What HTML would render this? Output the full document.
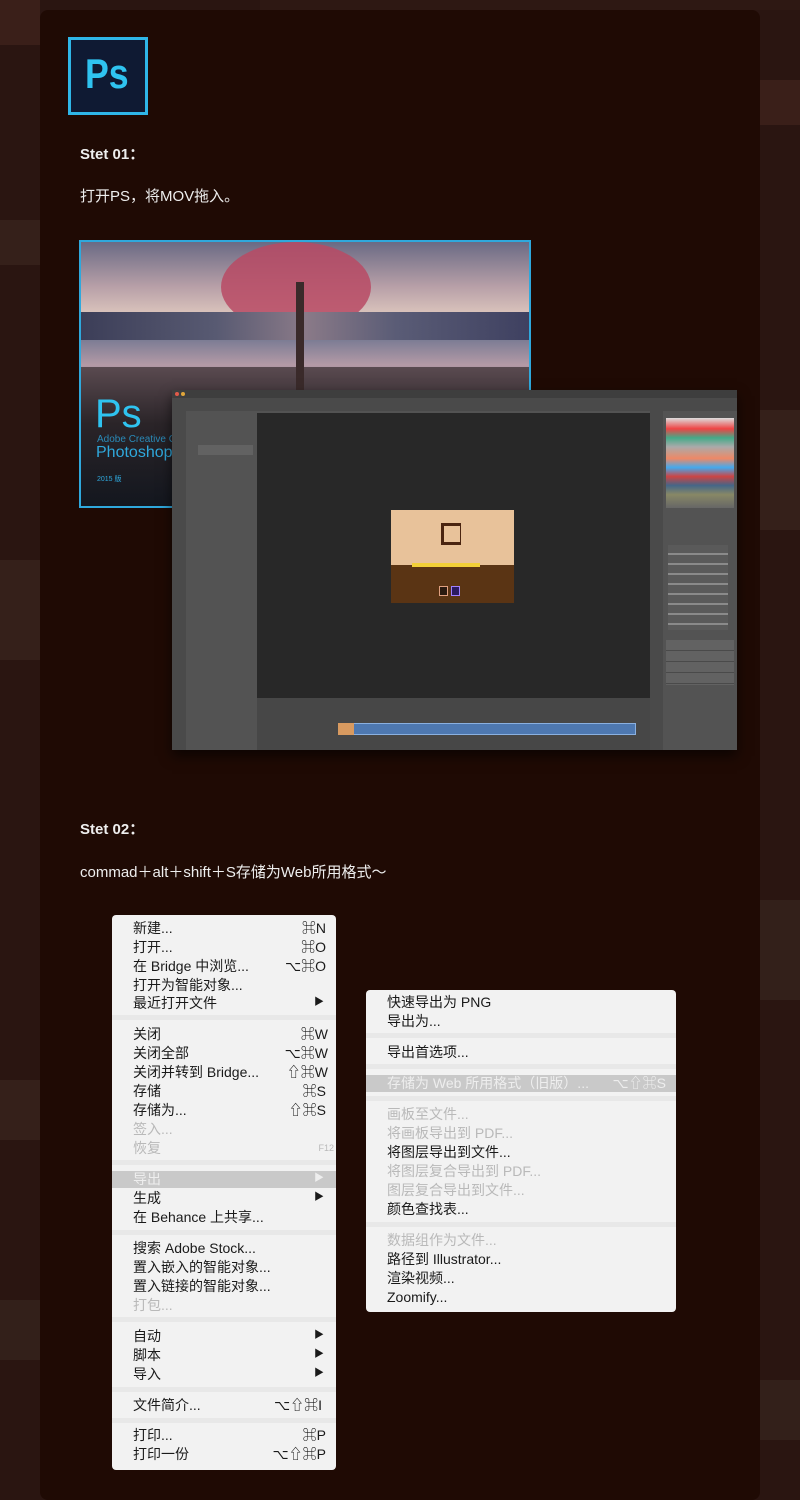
<!DOCTYPE html>
<html><head><meta charset="utf-8"><style>
*{margin:0;padding:0;box-sizing:border-box}
body{width:800px;height:1484px;background:#2a1511;position:relative;overflow:hidden;font-family:"Liberation Sans","Noto Sans CJK SC",sans-serif}
.blk{position:absolute;background:#3a1f19}
.card{position:absolute;left:40px;top:10px;width:720px;height:1490px;background:#1f0a04;border-radius:8px}
.t{position:absolute;color:#eee;font-size:15px}
.a{position:absolute}
.m{position:absolute;background:#f2f2f2;border-radius:4px;font-size:14px;color:#1a1a1a}
.m div{position:absolute;white-space:nowrap;line-height:16px}
.r{text-align:right}
.g{color:#b9b9b9}
.sep{height:5px;background:#e8e8e8;left:0;right:0}
.hl{background:#c9c9c9;left:0;right:0;height:17px}
</style></head><body>
<div class="blk" style="left:0;top:0;width:40px;height:45px"></div>
<div class="blk" style="left:0;top:220px;width:40px;height:45px;background:#35201a"></div>
<div class="blk" style="left:0;top:560px;width:40px;height:100px;background:#35201a"></div>
<div class="blk" style="left:0;top:1080px;width:40px;height:60px;background:#35201a"></div>
<div class="blk" style="left:0;top:1300px;width:40px;height:60px;background:#33201a"></div>
<div class="blk" style="left:760px;top:80px;width:40px;height:45px"></div>
<div class="blk" style="left:760px;top:410px;width:40px;height:120px;background:#35201a"></div>
<div class="blk" style="left:760px;top:900px;width:40px;height:100px;background:#33201a"></div>
<div class="blk" style="left:760px;top:1380px;width:40px;height:60px;background:#33201a"></div>
<div class="blk" style="left:260px;top:0;width:540px;height:10px;background:#2e1813"></div>
<div class="card"></div>

<div class="a" style="left:68px;top:37px;width:80px;height:78px;background:#0f1a33;border:3px solid #2fb6e8"></div>
<div class="a" style="left:85px;top:50px;color:#2fc3f0;font-size:42px;font-weight:bold;font-family:'Liberation Sans Narrow','Liberation Sans',sans-serif;transform:scaleX(.85);transform-origin:left">Ps</div>

<div class="t" style="left:80px;top:143px;font-weight:bold">Stet 01：</div>
<div class="t" style="left:80px;top:185px">打开PS，将MOV拖入。</div>

<!-- splash -->
<div class="a" style="left:79px;top:240px;width:452px;height:268px;border:2px solid #2fa8dc;overflow:hidden;background:#141820">
 <div class="a" style="left:0;top:0;width:450px;height:150px;background:linear-gradient(180deg,#6a6a84 0%,#b8a0a8 30%,#e8d2c4 55%,#9a8a98 100%)"></div>
 <div class="a" style="left:140px;top:0;width:150px;height:90px;border-radius:50%;background:#b84a64;opacity:.85"></div>
 <div class="a" style="left:0;top:70px;width:450px;height:30px;background:linear-gradient(90deg,#3c3e58,#585a72 30%,#8a7a88 50%,#5a5c76 70%,#3e4060)"></div>
 <div class="a" style="left:0;top:98px;width:450px;height:50px;background:linear-gradient(180deg,#7c7c94,#b49aa6 50%,#6a6a86)"></div>
 <div class="a" style="left:0;top:125px;width:450px;height:143px;background:linear-gradient(180deg,#5a4a50,#2a2428 40%,#12161e)"></div>
 <div class="a" style="left:215px;top:40px;width:8px;height:110px;background:#3a2a2a"></div>
 <div class="a" style="left:14px;top:150px;color:#2fc3f0;font-size:40px">Ps</div>
 <div class="a" style="left:16px;top:192px;color:#2a8ab8;font-size:10px">Adobe Creative Cloud</div>
 <div class="a" style="left:15px;top:202px;color:#2fa8dc;font-size:16px">Photoshop</div>
 <div class="a" style="left:16px;top:232px;color:#2fa8dc;font-size:7px">2015 版</div>
</div>

<!-- PS window -->
<div class="a" style="left:172px;top:390px;width:565px;height:360px;background:#535353;box-shadow:0 6px 12px rgba(0,0,0,.6)">
 <div class="a" style="left:0;top:0;width:565px;height:8px;background:#3e3e3e"></div>
 <div class="a" style="left:3px;top:2px;width:4px;height:4px;border-radius:50%;background:#e05a4a"></div>
 <div class="a" style="left:9px;top:2px;width:4px;height:4px;border-radius:50%;background:#e0a63a"></div>
 <div class="a" style="left:0;top:8px;width:565px;height:13px;background:#4a4a4a"></div>
 <div class="a" style="left:0;top:21px;width:14px;height:339px;background:#4a4a4a"></div>
 <div class="a" style="left:14px;top:21px;width:70px;height:300px;background:#535353"></div>
 <div class="a" style="left:26px;top:55px;width:55px;height:10px;background:#626262"></div>
 <div class="a" style="left:85px;top:23px;width:393px;height:285px;background:#282828"></div>
 <div class="a" style="left:219px;top:120px;width:123px;height:93px;background:#e8c29a"></div>
 <div class="a" style="left:219px;top:175px;width:123px;height:38px;background:#5a3414"></div>
 <div class="a" style="left:240px;top:173px;width:68px;height:4px;background:#f2cf38"></div>
 <div class="a" style="left:269px;top:133px;width:20px;height:22px;border:3px solid #4a2410;border-right-width:1px"></div>
 <div class="a" style="left:267px;top:196px;width:9px;height:10px;background:#2a1a10;border:1px solid #e0a080"></div>
 <div class="a" style="left:279px;top:196px;width:9px;height:10px;background:#2a1a60;border:1px solid #a080ff"></div>
 <div class="a" style="left:85px;top:308px;width:393px;height:52px;background:#474747"></div>
 <div class="a" style="left:166px;top:333px;width:298px;height:12px;background:#4e78b0;border:1px solid #8ab0e0"></div>
 <div class="a" style="left:166px;top:333px;width:16px;height:12px;background:#d89a60"></div>
 <div class="a" style="left:478px;top:21px;width:13px;height:339px;background:#4a4a4a"></div>
 <div class="a" style="left:494px;top:28px;width:68px;height:90px;background:linear-gradient(180deg,#ddd 0%,#e44 12%,#4a8 22%,#aaa 32%,#e86 45%,#4ae 55%,#c44 65%,#468 75%,#886 85%,#666 100%)"></div>
 <div class="a" style="left:496px;top:155px;width:60px;height:85px;background:repeating-linear-gradient(180deg,#5a5a5a 0 8px,#8a8a8a 8px 10px)"></div>
 <div class="a" style="left:494px;top:250px;width:68px;height:45px;background:repeating-linear-gradient(180deg,#626262 0 10px,#4a4a4a 10px 11px)"></div>
</div>

<div class="t" style="left:80px;top:818px;font-weight:bold">Stet 02：</div>
<div class="t" style="left:80px;top:861px">commad＋alt＋shift＋S存储为Web所用格式～</div>

<!-- left menu -->
<div class="m" style="left:112px;top:915px;width:224px;height:555px">
 <div style="left:21px;top:5px">新建...</div><div class="r" style="right:10px;top:5px">⌘N</div>
 <div style="left:21px;top:24px">打开...</div><div class="r" style="right:10px;top:24px">⌘O</div>
 <div style="left:21px;top:43px">在 Bridge 中浏览...</div><div class="r" style="right:10px;top:43px">⌥⌘O</div>
 <div style="left:21px;top:62px">打开为智能对象...</div>
 <div style="left:21px;top:80px">最近打开文件</div><div style="right:12px;top:80px;font-size:10px">▶</div>
 <div class="sep" style="top:100px"></div>
 <div style="left:21px;top:111px">关闭</div><div class="r" style="right:8px;top:111px">⌘W</div>
 <div style="left:21px;top:130px">关闭全部</div><div class="r" style="right:8px;top:130px">⌥⌘W</div>
 <div style="left:21px;top:149px">关闭并转到 Bridge...</div><div class="r" style="right:8px;top:149px">⇧⌘W</div>
 <div style="left:21px;top:168px">存储</div><div class="r" style="right:10px;top:168px">⌘S</div>
 <div style="left:21px;top:187px">存储为...</div><div class="r" style="right:10px;top:187px">⇧⌘S</div>
 <div class="g" style="left:21px;top:206px">签入...</div>
 <div class="g" style="left:21px;top:225px">恢复</div><div class="g" style="right:2px;top:225px;font-size:9px">F12</div>
 <div class="sep" style="top:245px"></div>
 <div class="hl" style="top:256px"></div>
 <div style="left:21px;top:256px;color:#eee">导出</div><div style="right:12px;top:256px;font-size:10px;color:#eee">▶</div>
 <div style="left:21px;top:275px">生成</div><div style="right:12px;top:275px;font-size:10px">▶</div>
 <div style="left:21px;top:294px">在 Behance 上共享...</div>
 <div class="sep" style="top:315px"></div>
 <div style="left:21px;top:325px">搜索 Adobe Stock...</div>
 <div style="left:21px;top:344px">置入嵌入的智能对象...</div>
 <div style="left:21px;top:363px">置入链接的智能对象...</div>
 <div class="g" style="left:21px;top:382px">打包...</div>
 <div class="sep" style="top:402px"></div>
 <div style="left:21px;top:413px">自动</div><div style="right:12px;top:413px;font-size:10px">▶</div>
 <div style="left:21px;top:432px">脚本</div><div style="right:12px;top:432px;font-size:10px">▶</div>
 <div style="left:21px;top:451px">导入</div><div style="right:12px;top:451px;font-size:10px">▶</div>
 <div class="sep" style="top:472px"></div>
 <div style="left:21px;top:482px">文件简介...</div><div class="r" style="right:14px;top:482px">⌥⇧⌘I</div>
 <div class="sep" style="top:503px"></div>
 <div style="left:21px;top:512px">打印...</div><div class="r" style="right:10px;top:512px">⌘P</div>
 <div style="left:21px;top:531px">打印一份</div><div class="r" style="right:10px;top:531px">⌥⇧⌘P</div>
</div>

<!-- right menu -->
<div class="m" style="left:366px;top:990px;width:310px;height:322px">
 <div style="left:21px;top:4px">快速导出为 PNG</div>
 <div style="left:21px;top:23px">导出为...</div>
 <div class="sep" style="top:43px"></div>
 <div style="left:21px;top:54px">导出首选项...</div>
 <div class="sep" style="top:74px"></div>
 <div class="hl" style="top:85px"></div>
 <div style="left:21px;top:85px;color:#eee">存储为 Web 所用格式（旧版）...</div><div style="right:10px;top:85px;color:#eee">⌥⇧⌘S</div>
 <div class="sep" style="top:106px"></div>
 <div class="g" style="left:21px;top:116px">画板至文件...</div>
 <div class="g" style="left:21px;top:135px">将画板导出到 PDF...</div>
 <div style="left:21px;top:154px">将图层导出到文件...</div>
 <div class="g" style="left:21px;top:173px">将图层复合导出到 PDF...</div>
 <div class="g" style="left:21px;top:192px">图层复合导出到文件...</div>
 <div style="left:21px;top:211px">颜色查找表...</div>
 <div class="sep" style="top:232px"></div>
 <div class="g" style="left:21px;top:242px">数据组作为文件...</div>
 <div style="left:21px;top:261px">路径到 Illustrator...</div>
 <div style="left:21px;top:280px">渲染视频...</div>
 <div style="left:21px;top:299px">Zoomify...</div>
</div>
</body></html>
